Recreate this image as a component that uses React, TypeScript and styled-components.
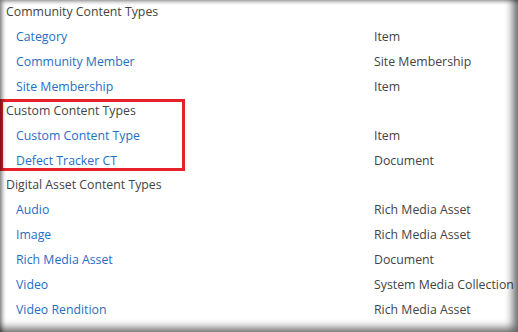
import React from "react";
import styled, { createGlobalStyle } from "styled-components";

const Global = createGlobalStyle`
  html, body { margin: 0; padding: 0; background: #fff; }
  body { font-family: "Open Sans", "Noto Sans", sans-serif; }
`;

const Frame = styled.div`
  position: relative;
  width: 518px;
  height: 332px;
  box-sizing: border-box;
  overflow: hidden;
  background: #fff;
`;

const Shade = styled.div`
  position: absolute;
  inset: 0;
  pointer-events: none;
  box-shadow: inset 4px 3px 4px -2px rgba(0, 0, 0, 0.55),
    inset -9px -8px 8px -4px rgba(0, 0, 0, 0.6);
`;

const Highlight = styled.div`
  position: absolute;
  left: 0;
  top: 99px;
  width: 185px;
  height: 72px;
  box-sizing: border-box;
  border: 3px solid #e8202a;
  pointer-events: none;
`;

const Table = styled.div`
  display: flex;
  flex-direction: column;
`;

const HeaderRow = styled.div`
  height: 24px;
  line-height: 23px;
  padding-left: 6px;
  font-size: 12.3px;
  color: #444;
  white-space: nowrap;
`;

const ItemRow = styled.div`
  height: 25px;
  display: grid;
  grid-template-columns: 374px 1fr;
  line-height: 25px;
  font-size: 12.3px;
  white-space: nowrap;
`;

const Name = styled.a`
  padding-left: 16px;
  color: #1f6fc5;
  text-decoration: none;
`;

const Parent = styled.span`
  color: #444;
`;

type Item = [string, string];
const groups: { title: string; items: Item[] }[] = [
  {
    title: "Community Content Types",
    items: [
      ["Category", "Item"],
      ["Community Member", "Site Membership"],
      ["Site Membership", "Item"],
    ],
  },
  {
    title: "Custom Content Types",
    items: [
      ["Custom Content Type", "Item"],
      ["Defect Tracker CT", "Document"],
    ],
  },
  {
    title: "Digital Asset Content Types",
    items: [
      ["Audio", "Rich Media Asset"],
      ["Image", "Rich Media Asset"],
      ["Rich Media Asset", "Document"],
      ["Video", "System Media Collection"],
      ["Video Rendition", "Rich Media Asset"],
    ],
  },
];

export default function App() {
  return (
    <>
      <Global />
      <Frame>
        <Table>
          {groups.map((g) => (
            <React.Fragment key={g.title}>
              <HeaderRow>{g.title}</HeaderRow>
              {g.items.map(([n, p]) => (
                <ItemRow key={n}>
                  <Name href="#">{n}</Name>
                  <Parent>{p}</Parent>
                </ItemRow>
              ))}
            </React.Fragment>
          ))}
        </Table>
        <Highlight />
        <Shade />
      </Frame>
    </>
  );
}
